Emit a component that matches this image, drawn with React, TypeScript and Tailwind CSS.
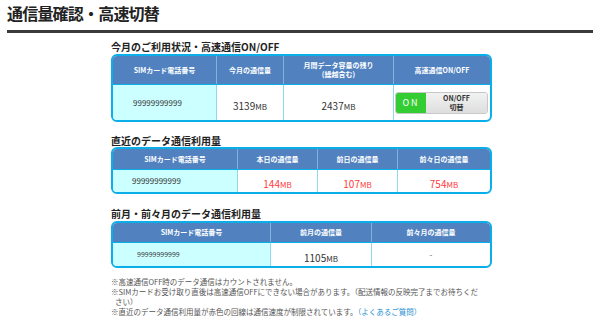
const HEAD = "bg-[#5182bf] text-white font-bold text-[7px] leading-[9px] flex items-center justify-center text-center";

const Mb = ({ v, red }: { v: string; red?: boolean }) => (
  <span className={red ? "text-[#ff3b3b]" : "text-[#333]"}>
    <span className="text-[10px]">{v}</span>
    <span className="text-[8px]">MB</span>
  </span>
);

const OnOffButton = () => (
  <div className="flex h-[22px] w-[93px] overflow-hidden rounded-[3px] border border-[#c8c8c8]">
    <div className="flex w-[30px] items-center justify-center bg-[#33cc33] text-[9px] tracking-[2px] text-white">
      ON
    </div>
    <div className="flex flex-1 flex-col items-center justify-center bg-gradient-to-b from-[#f2f2f2] to-[#dedede] text-[7px] font-bold leading-[9px] text-[#333]">
      <span>ON/OFF</span>
      <span>切替</span>
    </div>
  </div>
);

export default function App() {
  return (
    <div className="h-[332px] w-[600px] overflow-hidden bg-white font-['Noto_Sans_CJK_JP',sans-serif] text-[#222]">
      <div className="mx-[7px] h-[33px] border-b-[3px] border-[#3a3a3a]">
        <h1 className="pt-[3px] text-[16px] font-bold leading-[20px] tracking-[-0.8px]">
          通信量確認・高速切替
        </h1>
      </div>

      <div className="ml-[111px] w-[381px]">
        {/* 今月 */}
        <h2 className="mt-[8px] h-[12px] text-[10px] font-bold leading-[12px]">
          今月のご利用状況・高速通信ON/OFF
        </h2>
        <div className="mt-[1px] overflow-hidden rounded-[6px] border-2 border-[#0aaee8]">
          <div className="flex h-[29px] border-b border-[#0aaee8]">
            <div className={`${HEAD} w-[103px]`}>SIMカード電話番号</div>
            <div className={`${HEAD} w-[67px] border-l border-[#7fb2dc]`}>今月の通信量</div>
            <div className={`${HEAD} w-[110px] border-l border-[#7fb2dc] flex-col`}>
              <span>月間データ容量の残り</span>
              <span>(繰越含む)</span>
            </div>
            <div className={`${HEAD} w-[97px] border-l border-[#7fb2dc]`}>高速通信ON/OFF</div>
          </div>
          <div className="flex h-[35px]">
            <div className="flex w-[103px] items-center bg-[#ccffff] pl-[20px] text-[8px] text-[#333]">
              99999999999
            </div>
            <div className="flex w-[67px] items-center justify-center border-l border-[#8fd8ee]">
              <Mb v="3139" />
            </div>
            <div className="flex w-[110px] items-center justify-center border-l border-[#8fd8ee]">
              <Mb v="2437" />
            </div>
            <div className="flex w-[97px] items-center border-l border-[#8fd8ee] pl-[1px]">
              <OnOffButton />
            </div>
          </div>
        </div>

        {/* 直近 */}
        <h2 className="mt-[13px] h-[12px] text-[10px] font-bold leading-[12px]">
          直近のデータ通信利用量
        </h2>
        <div className="overflow-hidden rounded-[6px] border-2 border-[#0aaee8]">
          <div className="flex h-[21px] border-b border-[#0aaee8]">
            <div className={`${HEAD} w-[124px]`}>SIMカード電話番号</div>
            <div className={`${HEAD} w-[80px] border-l border-[#7fb2dc]`}>本日の通信量</div>
            <div className={`${HEAD} w-[80px] border-l border-[#7fb2dc]`}>前日の通信量</div>
            <div className={`${HEAD} w-[93px] border-l border-[#7fb2dc]`}>前々日の通信量</div>
          </div>
          <div className="flex h-[22px]">
            <div className="flex w-[124px] items-center bg-[#ccffff] pl-[19px] text-[8px] text-[#333]">
              99999999999
            </div>
            <div className="flex w-[80px] items-center justify-center border-l border-[#8fd8ee]">
              <Mb v="144" red />
            </div>
            <div className="flex w-[80px] items-center justify-center border-l border-[#8fd8ee]">
              <Mb v="107" red />
            </div>
            <div className="flex w-[93px] items-center justify-center border-l border-[#8fd8ee]">
              <Mb v="754" red />
            </div>
          </div>
        </div>

        {/* 前月・前々月 */}
        <h2 className="mt-[14px] h-[12px] text-[10px] font-bold leading-[12px]">
          前月・前々月のデータ通信利用量
        </h2>
        <div className="mt-[1px] overflow-hidden rounded-[6px] border-2 border-[#0aaee8]">
          <div className="flex h-[20px] border-b border-[#0aaee8]">
            <div className={`${HEAD} w-[157px]`}>SIMカード電話番号</div>
            <div className={`${HEAD} w-[101px] border-l border-[#7fb2dc]`}>前月の通信量</div>
            <div className={`${HEAD} w-[119px] border-l border-[#7fb2dc]`}>前々月の通信量</div>
          </div>
          <div className="flex h-[23px]">
            <div className="flex w-[157px] items-center bg-[#ccffff] pl-[24px] text-[7px] text-[#333]">
              99999999999
            </div>
            <div className="flex w-[101px] items-center justify-center border-l border-[#8fd8ee]">
              <Mb v="1105" />
            </div>
            <div className="flex w-[119px] items-center justify-center border-l border-[#8fd8ee] text-[8px] text-[#555]">
              -
            </div>
          </div>
        </div>

        {/* 注意書き */}
        <div className="mt-[9px] text-[7.5px] leading-[10px] text-[#555]">
          <p className="pl-[4px] -indent-[4px]">※高速通信OFF時のデータ通信はカウントされません。</p>
          <p className="pl-[4px] -indent-[4px]">
            ※SIMカードお受け取り直後は高速通信OFFにできない場合があります。（配送情報の反映完了までお待ちくだ
            <br />
            さい）
          </p>
          <p className="pl-[4px] -indent-[4px]">
            ※直近のデータ通信利用量が赤色の回線は通信速度が制限されています。
            <span className="text-[#2a8fd0]">（よくあるご質問）</span>
          </p>
        </div>
      </div>
    </div>
  );
}
